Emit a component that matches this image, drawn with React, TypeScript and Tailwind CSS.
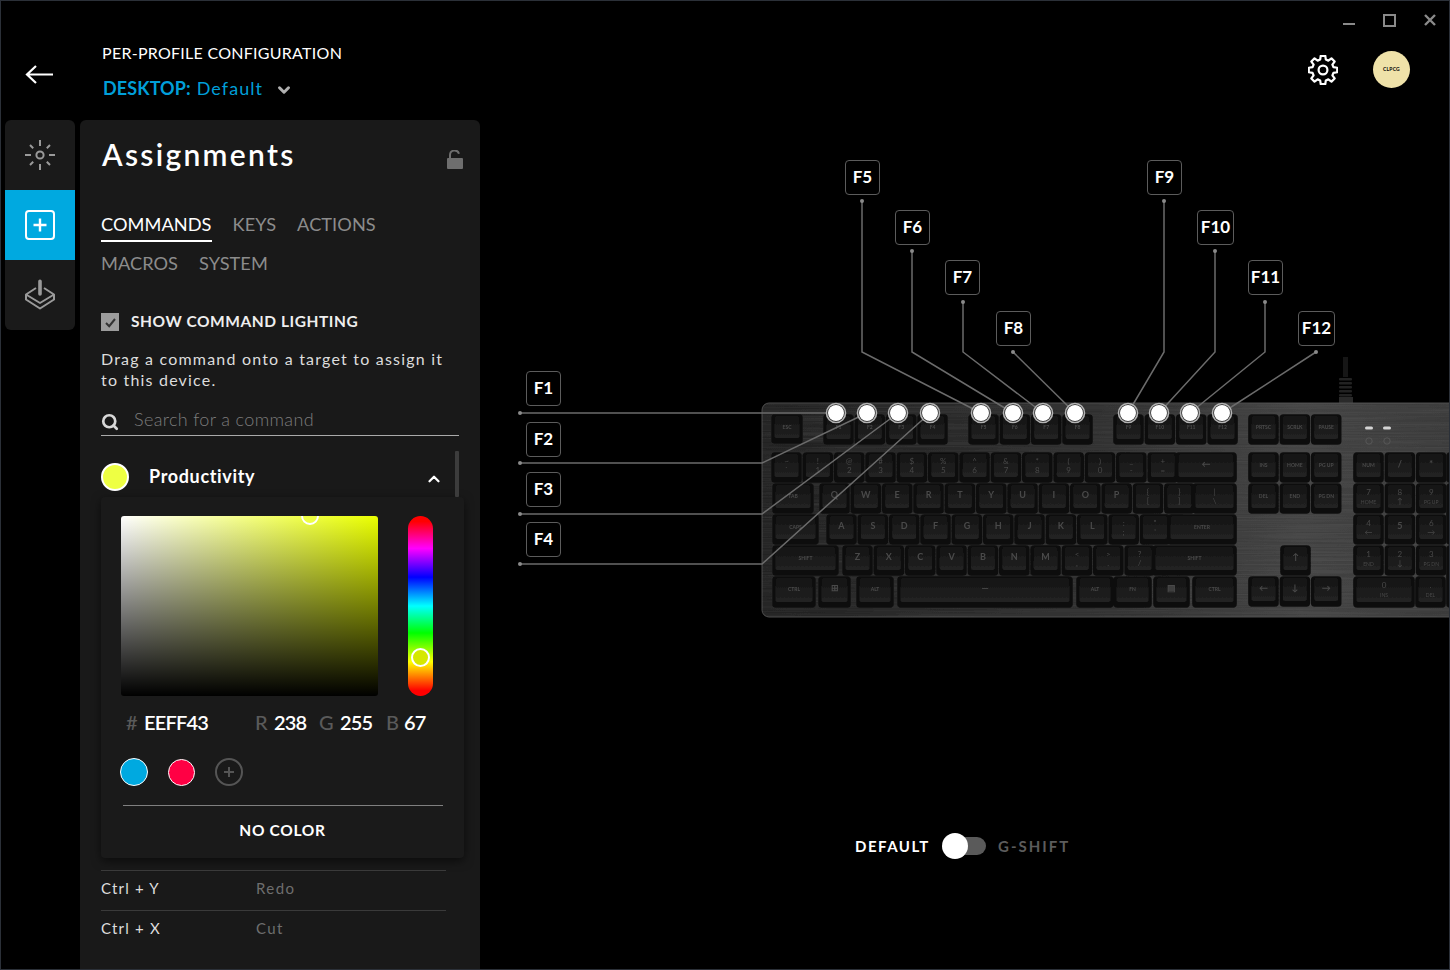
import { ChevronDown, ChevronUp, Search } from 'lucide-react';

// F-key callouts: box + the polyline that runs down to its node (page coordinates).
interface Callout {
  label: string;
  x: number;
  y: number;
  w: number;
  points: string;
}

const CANVAS_X = 480;
const CANVAS_Y = 120;

const CALLOUTS: Callout[] = [
  { label: 'F1', x: 526, y: 371, w: 35, points: '520,413 836,413' },
  { label: 'F2', x: 526, y: 422, w: 35, points: '520,463 762,463 867,413' },
  { label: 'F3', x: 526, y: 472, w: 35, points: '520,514 762,514 898,413' },
  { label: 'F4', x: 526, y: 522, w: 35, points: '520,564 762,564 930,413' },
  { label: 'F5', x: 845, y: 160, w: 35, points: '862,201 862,352 981,413' },
  { label: 'F6', x: 895, y: 210, w: 35, points: '912,251 912,352 1013,413' },
  { label: 'F7', x: 945, y: 260, w: 35, points: '963,302 963,352 1043,413' },
  { label: 'F8', x: 996, y: 311, w: 35, points: '1013,352 1075,413' },
  { label: 'F9', x: 1147, y: 160, w: 35, points: '1164,201 1164,352 1128,413' },
  { label: 'F10', x: 1197, y: 210, w: 37, points: '1215,251 1215,352 1159,413' },
  { label: 'F11', x: 1248, y: 260, w: 35, points: '1265,302 1265,352 1190,413' },
  { label: 'F12', x: 1298, y: 311, w: 37, points: '1316,352 1222,413' },
];

const NODES = [836, 867, 898, 930, 981, 1013, 1043, 1075, 1128, 1159, 1190, 1222];

interface Key {
  x: number;
  y: number;
  w: number;
  h: number;
  t?: string;
  s?: string;
}

const P = 31.35;
const R1 = 415;
const R2 = 453;
const R3 = 484;
const R4 = 515;
const R5 = 546;
const R6 = 577;
const H = 29;

const row = (labels: string[], x: number, y: number): Key[] =>
  labels.map((t, i) => {
    const [a, b] = t.split('|');
    return { x: x + i * P, y, w: 29, h: H, t: a, s: b };
  });

const KEYS: Key[] = [
  { x: 772, y: R1, w: 30, h: 28, t: 'ESC' },
  ...row(['F1', 'F2', 'F3', 'F4'], 824, R1),
  ...row(['F5', 'F6', 'F7', 'F8'], 969, R1),
  ...row(['F9', 'F10', 'F11', 'F12'], 1114, R1),
  ...row(['PRTSC', 'SCRLK', 'PAUSE'], 1249, R1),
  ...row(['~|`', '!|1', '@|2', '#|3', '$|4', '%|5', '^|6', '&|7', '*|8', '(|9', ')|0', '_|-', '+|='], 772, R2),
  { x: 1176, y: R2, w: 60, h: H, t: '←' },
  { x: 773, y: R3, w: 40, h: H, t: 'TAB' },
  ...row(['Q', 'W', 'E', 'R', 'T', 'Y', 'U', 'I', 'O', 'P', '{|[', '}|]'], 820, R3),
  { x: 1193, y: R3, w: 43, h: H, t: '|', s: '\\' },
  { x: 773, y: R4, w: 45, h: H, t: 'CAPS' },
  ...row(['A', 'S', 'D', 'F', 'G', 'H', 'J', 'K', 'L', ':|;', '"|\''], 827, R4),
  { x: 1168, y: R4, w: 68, h: H, t: 'ENTER' },
  { x: 773, y: R5, w: 65, h: H, t: 'SHIFT' },
  ...row(['Z', 'X', 'C', 'V', 'B', 'N', 'M', '<|,', '>|.', '?|/'], 843, R5),
  { x: 1153, y: R5, w: 83, h: H, t: 'SHIFT' },
  { x: 773, y: R6, w: 42, h: 30, t: 'CTRL' },
  { x: 819, y: R6, w: 31, h: 30, t: '⊞' },
  { x: 857, y: R6, w: 36, h: 30, t: 'ALT' },
  { x: 898, y: R6, w: 174, h: 30, t: '—' },
  { x: 1077, y: R6, w: 36, h: 30, t: 'ALT' },
  { x: 1114, y: R6, w: 37, h: 30, t: 'FN' },
  { x: 1154, y: R6, w: 35, h: 30, t: '▤' },
  { x: 1193, y: R6, w: 43, h: 30, t: 'CTRL' },
  ...row(['INS', 'HOME', 'PG UP'], 1249, R2),
  ...row(['DEL', 'END', 'PG DN'], 1249, R3),
  { x: 1281, y: R5, w: 29, h: H, t: '↑' },
  ...row(['←', '↓', '→'], 1249, R6),
  ...row(['NUM', '/', '*'], 1354, R2),
  ...row(['7|HOME', '8|↑', '9|PG UP'], 1354, R3),
  ...row(['4|←', '5', '6|→'], 1354, R4),
  ...row(['1|END', '2|↓', '3|PG DN'], 1354, R5),
  { x: 1354, y: R6, w: 60, h: 30, t: '0', s: 'INS' },
  { x: 1416, y: R6, w: 29, h: 30, t: '.', s: 'DEL' },
  { x: 1447, y: R2, w: 29, h: H },
  { x: 1447, y: R3, w: 29, h: 60 },
  { x: 1447, y: R5, w: 29, h: 61 },
];

const gearPath = (cx: number, cy: number, ro: number, ri: number, teeth: number) => {
  const pts: string[] = [];
  const step = (Math.PI * 2) / teeth;
  for (let i = 0; i < teeth; i++) {
    const a = i * step - Math.PI / 2;
    const at = (r: number, d: number) =>
      `${(cx + r * Math.cos(a + d)).toFixed(2)} ${(cy + r * Math.sin(a + d)).toFixed(2)}`;
    pts.push(at(ri, -step * 0.34), at(ro, -step * 0.2), at(ro, step * 0.2), at(ri, step * 0.34));
  }
  return `M${pts.join('L')}Z`;
};

function Keyboard() {
  return (
    <g>
      {/* cable */}
      <g filter="url(#soft)">
        <rect x="1343" y="357" width="5" height="20" fill="#141414" />
        {[378, 382, 386, 390, 394].map((y) => (
          <rect key={y} x="1339" y={y} width="13" height="2.5" rx="1" fill="#242424" />
        ))}
        <rect x="1339" y="397" width="14" height="6" fill="#2c2c2c" />
      </g>
      <g filter="url(#soft)">
        <rect x="762" y="403" width="720" height="214" rx="7" fill="url(#plate)" stroke="#4c4c4c" strokeWidth="1" />
        <rect x="762" y="403" width="720" height="214" rx="7" filter="url(#brushed)" opacity="0.18" />
        {KEYS.map((k, i) => (
          <g key={i}>
            <rect x={k.x} y={k.y} width={k.w} height={k.h} rx="3" fill="#0a0a0a" stroke="#101010" strokeWidth="1.6" />
            <rect x={k.x + 2.5} y={k.y + 1} width={k.w - 5} height={k.h - 6} rx="2" fill="url(#cap)" />
          </g>
        ))}
        <rect x="1365" y="426.5" width="8" height="3" rx="1.5" fill="#d4d4d4" />
        <rect x="1383" y="426.5" width="8" height="3" rx="1.5" fill="#d4d4d4" />
        <circle cx="1369" cy="441" r="3.2" fill="none" stroke="#5c5c5c" strokeWidth="0.8" />
        <circle cx="1387" cy="441" r="3.2" fill="none" stroke="#5c5c5c" strokeWidth="0.8" />
      </g>
      {/* legends stay a little crisper than the caps */}
      <g filter="url(#legend)">
        {KEYS.map((k, i) =>
          k.s ? (
            <g key={i} fill="#484848" textAnchor="middle">
              <text x={k.x + k.w / 2} y={k.y + 11} fontSize="8">
                {k.t}
              </text>
              <text x={k.x + k.w / 2} y={k.y + 20} fontSize={k.s.length > 1 ? 5 : 8}>
                {k.s}
              </text>
            </g>
          ) : (
            <text
              key={i}
              x={k.x + k.w / 2}
              y={k.y + 14}
              textAnchor="middle"
              fontSize={(k.t ?? '').length > 1 ? 5 : 9}
              fontWeight="700"
              fill="#4a4a4a"
            >
              {k.t}
            </text>
          ),
        )}
      </g>
    </g>
  );
}

function Diagram() {
  return (
    <div className="relative flex-1">
      <svg
        className="absolute left-0 top-0"
        width="969"
        height="849"
        viewBox={`${CANVAS_X} ${CANVAS_Y} 969 849`}
        style={{ fontFamily: 'Lato, sans-serif' }}
      >
        <defs>
          <filter id="soft" x="-5%" y="-5%" width="110%" height="110%">
            <feGaussianBlur stdDeviation="0.7" />
          </filter>
          <filter id="legend" x="-5%" y="-5%" width="110%" height="110%">
            <feGaussianBlur stdDeviation="0.45" />
          </filter>
          <filter id="brushed" x="0" y="0" width="100%" height="100%">
            <feTurbulence type="fractalNoise" baseFrequency="0.008 0.7" numOctaves="2" seed="4" />
            <feColorMatrix values="0 0 0 0 0.5  0 0 0 0 0.5  0 0 0 0 0.5  0.9 0 0 0 -0.25" />
            <feComposite in2="SourceGraphic" operator="in" />
          </filter>
          <linearGradient id="plate" x1="0" x2="1" y1="0" y2="0">
            <stop offset="0" stopColor="#222222" />
            <stop offset="0.45" stopColor="#2e2e2e" />
            <stop offset="0.75" stopColor="#424242" />
            <stop offset="1" stopColor="#383838" />
          </linearGradient>
          <linearGradient id="cap" x1="0" x2="0" y1="0" y2="1">
            <stop offset="0" stopColor="#141414" />
            <stop offset="1" stopColor="#222222" />
          </linearGradient>
        </defs>
        <Keyboard />
        {CALLOUTS.map((c) => {
          const [sx, sy] = c.points.split(' ')[0].split(',');
          return (
            <g key={c.label}>
              <polyline points={c.points} fill="none" stroke="#6b6b6b" strokeWidth="1.5" />
              <circle cx={sx} cy={sy} r="2" fill="#8a8a8a" />
            </g>
          );
        })}
        {NODES.map((x) => (
          <g key={x}>
            <circle cx={x} cy="413" r="9.5" fill="#1c1c1c" stroke="#b4b4b4" strokeWidth="1.6" />
            <circle cx={x} cy="413" r="8" fill="#ffffff" />
          </g>
        ))}
      </svg>

      {CALLOUTS.map((c) => (
        <div
          key={c.label}
          className="absolute flex h-[35px] items-center justify-center rounded-[4px] border border-[#5c5c5c] bg-black pb-[2px] text-[17px] font-bold text-white"
          style={{ left: c.x - CANVAS_X, top: c.y - CANVAS_Y, width: c.w }}
        >
          {c.label}
        </div>
      ))}

      <div className="absolute left-[375px] top-[713px] flex h-[26px] items-center">
        <span className="w-[88px] text-[15px] font-bold tracking-[1.5px] text-white">DEFAULT</span>
        <div className="relative h-[18px] w-[43px] rounded-full bg-[#5a5a5a]">
          <span className="absolute -top-[4px] -left-[1px] h-[26px] w-[26px] rounded-full bg-white" />
        </div>
        <span className="ml-[12px] text-[15px] font-bold tracking-[2px] text-[#5c5c5c]">G-SHIFT</span>
      </div>
    </div>
  );
}

function Rail() {
  return (
    <nav className="ml-[4px] flex h-[210px] w-[70px] shrink-0 flex-col overflow-hidden rounded-[6px] bg-[#1a1a1a]">
      <div className="flex h-[70px] items-center justify-center">
        <svg width="32" height="32" viewBox="-1 -1 32 32" fill="none" stroke="#9a9a9a" strokeWidth="2">
          <circle cx="15" cy="15" r="3.6" />
          <path d="M15 0v6M15 24v6M0 15h6M24 15h6M5 5l3.2 3.2M21.8 21.8l3.2 3.2M25 5l-3.2 3.2M8.2 21.8 5 25" />
        </svg>
      </div>
      <div className="flex h-[70px] items-center justify-center bg-[#00a9e0]">
        <svg width="30" height="30" viewBox="0 0 30 30" fill="none" stroke="#ffffff">
          <rect x="1" y="1" width="28" height="28" rx="3" strokeWidth="2" />
          <path d="M15 8.5v13M8.5 15h13" strokeWidth="2.4" />
        </svg>
      </div>
      <div className="flex h-[70px] items-center justify-center">
        <svg width="32" height="32" viewBox="0 0 32 32" fill="none" stroke="#9a9a9a" strokeWidth="2" strokeLinejoin="round">
          <path d="M16 0.5a1.8 1.8 0 0 1 1.8 1.8V15a1.8 1.8 0 0 1-3.6 0V2.3A1.8 1.8 0 0 1 16 0.5Z" fill="#9a9a9a" stroke="none" />
          <path d="M12 9 2 15.5 16 24l14-8.5L20 9" />
          <path d="M2 15.5v5L16 29.5l14-9v-5" />
        </svg>
      </div>
    </nav>
  );
}

function ColorPicker() {
  return (
    <div className="h-[361px] w-[363px] rounded-[4px] bg-[#1a1a1a] px-[20px] pt-[19px] shadow-[0_3px_10px_rgba(0,0,0,0.55)]">
      <div className="flex items-start">
        <div className="relative h-[180px] w-[257px] overflow-hidden rounded-[3px] bg-[linear-gradient(to_top,#000000,transparent),linear-gradient(to_right,#ffffff,#eaff00)]">
          <span className="absolute -top-[9px] left-[180px] h-[18px] w-[18px] rounded-full border-2 border-white bg-[#eeff43]" />
        </div>
        <div className="relative ml-[30px] h-[180px] w-[25px] rounded-full bg-[linear-gradient(to_top,#ff0000_3%,#ffff00_19%,#00ff00_35%,#00ffff_50%,#0000ff_66%,#ff00ff_82%,#ff0000_97%)]">
          <span className="absolute left-[3px] top-[132px] h-[19px] w-[19px] rounded-full border-2 border-white bg-[#d5e800]" />
        </div>
      </div>

      <div className="mt-[13px] flex h-[26px] items-center text-[20px] font-semibold tracking-[-0.8px] text-white">
        <span className="ml-[5px] w-[18px] font-medium text-[#5a5a5a]">#</span>
        <span className="w-[111px]">EEFF43</span>
        <span className="w-[19px] font-medium text-[#5a5a5a]">R</span>
        <span className="w-[45px]">238</span>
        <span className="w-[21px] font-medium text-[#5a5a5a]">G</span>
        <span className="w-[46px]">255</span>
        <span className="w-[18px] font-medium text-[#5a5a5a]">B</span>
        <span>67</span>
      </div>

      <div className="mt-[23px] flex h-[28px] items-center">
        <span className="ml-[-1px] h-[28px] w-[28px] rounded-full border border-white bg-[#00a9e0]" />
        <span className="ml-[20px] h-[27px] w-[27px] rounded-full border border-white bg-[#ff0044]" />
        <span className="ml-[20px] flex h-[28px] w-[28px] items-center justify-center rounded-full border-2 border-[#555555] text-[#555555]">
          <svg width="12" height="12" viewBox="0 0 12 12" stroke="currentColor" strokeWidth="2">
            <path d="M6 1v10M1 6h10" />
          </svg>
        </span>
      </div>

      <div className="ml-[2px] mt-[19px] h-px w-[320px] bg-[#808080]" />
      <div className="mt-[13px] text-center text-[15.5px] font-bold tracking-[0.7px] text-white">NO COLOR</div>
    </div>
  );
}

function Panel() {
  return (
    <section className="relative ml-[5px] flex h-[849px] w-[400px] shrink-0 flex-col overflow-hidden rounded-t-[6px] bg-[#191919] pl-[21px] text-white">
      <div className="flex h-[70px] items-center justify-between pb-[1px] pr-[17px]">
        <h1 className="ml-[1px] text-[30px] font-semibold tracking-[2.3px]">Assignments</h1>
        <svg className="mt-[10px]" width="16" height="19" viewBox="0 0 16 19" fill="#6e6e6e">
          <rect x="0" y="8" width="16" height="11" rx="1" />
          <path d="M3 8V5a4.6 4.6 0 0 1 9-1.2" fill="none" stroke="#6e6e6e" strokeWidth="2" />
        </svg>
      </div>

      <div className="mt-[18px] flex h-[39px] gap-[21px] text-[18.2px] font-normal tracking-[0.05px] text-[#8c8c8c]">
        <span className="h-[34px] border-b-2 border-white leading-[32px] text-white">COMMANDS</span>
        <span className="leading-[32px]">KEYS</span>
        <span className="leading-[32px]">ACTIONS</span>
      </div>
      <div className="flex h-[37px] gap-[21px] text-[18.2px] font-normal tracking-[0.05px] text-[#8c8c8c]">
        <span className="leading-[32px]">MACROS</span>
        <span className="leading-[32px]">SYSTEM</span>
      </div>

      <div className="mt-[29px] flex h-[18px] items-center">
        <span className="flex h-[18px] w-[18px] items-center justify-center bg-[#9c9c9c]">
          <svg width="13" height="13" viewBox="0 0 13 13" fill="none" stroke="#333333" strokeWidth="2">
            <path d="m2 7 3.2 3.2L11 3" />
          </svg>
        </span>
        <span className="ml-[12px] text-[15.5px] font-bold tracking-[0.55px] text-[#eeeeee]">SHOW COMMAND LIGHTING</span>
      </div>

      <p className="mt-[18px] w-[350px] text-[16px] leading-[20.5px] tracking-[1.2px] text-[#dddddd]">
        Drag a command onto a target to assign it to this device.
      </p>

      <div className="mt-[11px] flex h-[35px] w-[358px] items-end border-b border-[#aaaaaa] pb-[2px]">
        <Search size={18} strokeWidth={3.6} className="mb-[2px] text-[#d8d8d8]" />
        <span className="ml-[15px] text-[18px] font-light tracking-[0.35px] text-[#7c7c7c]">Search for a command</span>
      </div>

      <div className="mt-[20px] flex h-[41px] items-center">
        <span className="h-[28px] w-[28px] rounded-full border-2 border-white bg-[#eeff43]" />
        <span className="ml-[20px] text-[18px] font-bold tracking-[0.65px]">Productivity</span>
        <ChevronUp size={18} strokeWidth={3} className="ml-[170px] mt-[5px]" />
      </div>
      <span className="absolute left-[375px] top-[331px] h-[46px] w-[4px] rounded-[1px] bg-[#3c3c3c]" />

      <ColorPicker />

      <div className="mt-[12px] flex h-[40px] w-[345px] items-center border-t border-[#3a3a3a] pb-[4px] text-[15px]">
        <span className="w-[155px] tracking-[1.2px] text-[#dddddd]">Ctrl + Y</span>
        <span className="tracking-[1.4px] text-[#6e6e6e]">Redo</span>
      </div>
      <div className="flex h-[40px] w-[345px] items-center border-t border-[#3a3a3a] pb-[4px] text-[15px]">
        <span className="w-[155px] tracking-[1.2px] text-[#dddddd]">Ctrl + X</span>
        <span className="tracking-[1.4px] text-[#6e6e6e]">Cut</span>
      </div>
    </section>
  );
}

function Header() {
  return (
    <header className="flex h-[119px] shrink-0">
      <div className="ml-[24px] mt-[64px] w-[77px]">
        <svg width="28" height="20" viewBox="0 0 28 20" fill="none" stroke="#ffffff" strokeWidth="2.2">
          <path d="M28 9.5H2M11 1 2 9.5l9 8.5" />
        </svg>
      </div>
      <div className="pt-[41px]">
        <div className="text-[16px] leading-[22px] tracking-[0.27px] text-white">PER-PROFILE CONFIGURATION</div>
        <div className="mt-[12px] flex items-center text-[18px] leading-[24px] tracking-[1.05px] text-[#009fd9]">
          <span className="ml-[1px] font-bold tracking-[0.1px]">DESKTOP:</span>
          <span className="ml-[6px]">Default</span>
          <ChevronDown size={18} strokeWidth={4} className="ml-[12px] mt-[4px] text-[#b0b0b0]" />
        </div>
      </div>
      <div className="ml-auto flex w-[160px] flex-col items-end">
        <div className="mt-[12px] flex h-[14px] items-center text-[#8a8a8a]">
          <span className="mt-[7px] h-[2px] w-[12px] bg-[#8a8a8a]" />
          <span className="ml-[28px] h-[13px] w-[13px] border-[2.5px] border-[#8a8a8a]" />
          <svg className="ml-[28px] mr-[13px]" width="12" height="12" viewBox="0 0 12 12" stroke="currentColor" strokeWidth="2.4">
            <path d="m1 1 10 10M11 1 1 11" />
          </svg>
        </div>
        <div className="mr-[39px] mt-[24px] flex items-center">
          <svg width="30" height="30" viewBox="0 0 30 30" fill="none" stroke="#ffffff" strokeWidth="2.2" strokeLinejoin="round">
            <path d={gearPath(15, 15, 14.4, 10.8, 8)} />
            <circle cx="15" cy="15" r="4.4" />
          </svg>
          <div className="ml-[35px] flex h-[37px] w-[37px] items-center justify-center rounded-full bg-[#efe2a9] text-[5px] font-bold tracking-[0.2px] text-black">
            CLPCG
          </div>
        </div>
      </div>
    </header>
  );
}

export default function App() {
  return (
    <div className="flex h-[970px] w-[1450px] flex-col overflow-hidden border border-[#2b3038] bg-black [font-family:Lato,sans-serif]">
      <Header />
      <main className="flex flex-1">
        <Rail />
        <Panel />
        <Diagram />
      </main>
    </div>
  );
}
